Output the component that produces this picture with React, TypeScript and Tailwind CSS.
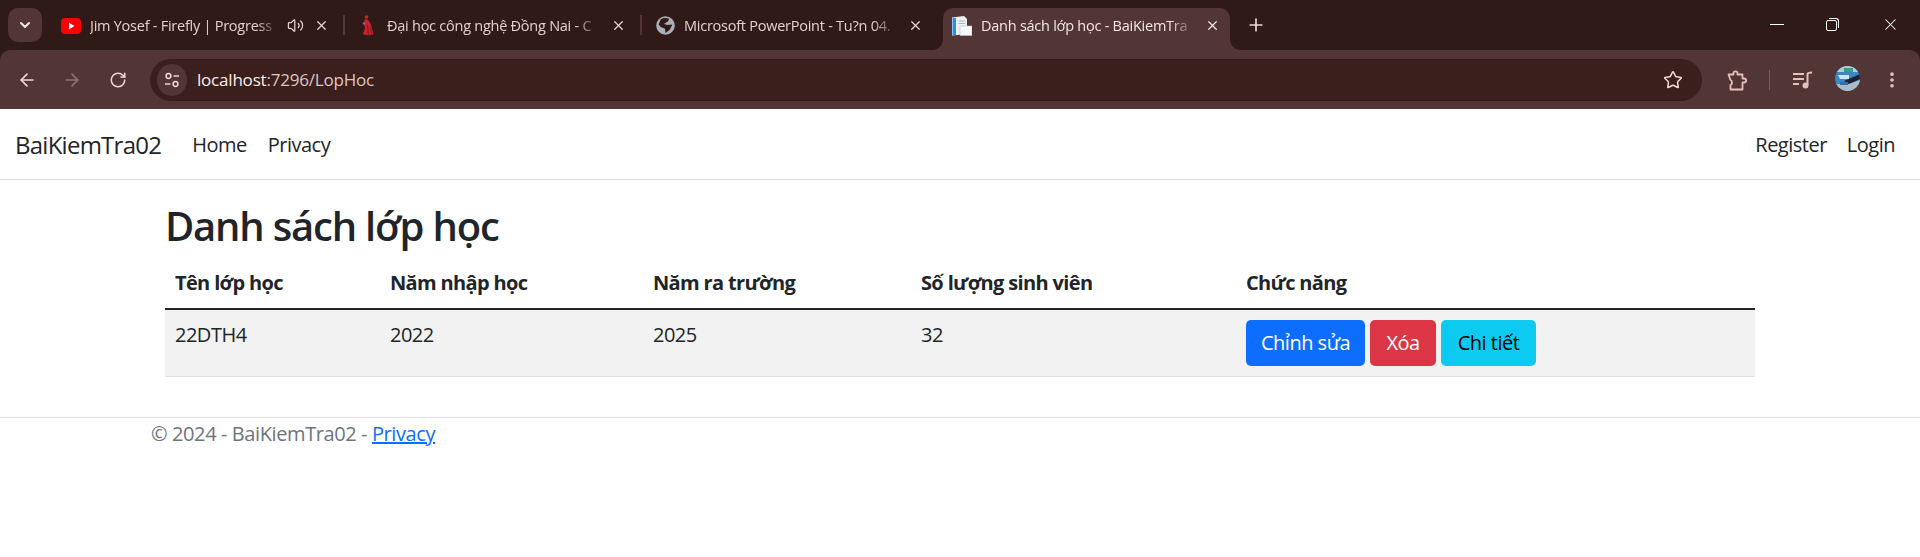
import { ChevronDown, ArrowLeft, ArrowRight, RotateCw, Star, EllipsisVertical, X, Plus, Volume2 } from 'lucide-react'
import type { ReactNode } from 'react'

function YoutubeIcon() {
  return (
    <svg width="20" height="16" viewBox="0 0 20 16">
      <rect x="0" y="0" width="20" height="16" rx="4" fill="#ff0000" />
      <path d="M8 4.6 L13.4 8 L8 11.4 Z" fill="#fff" />
    </svg>
  )
}

function SchoolIcon() {
  return (
    <svg width="14" height="21" viewBox="0 0 14 21">
      <circle cx="5.5" cy="2" r="1.8" fill="#d3232a" />
      <path d="M4 4 C7 4 9 7 10 10 L12.5 19 C12 20.5 3 20.5 2 19 L4 13 L2.5 8 Z" fill="#c9212a" />
      <path d="M6.5 10 L7.5 20 M9.5 12 L10.5 20" stroke="#7c1a1c" strokeWidth="1" />
      <circle cx="3" cy="8.5" r="1.2" fill="#3f7fb5" />
    </svg>
  )
}

function GlobeIcon() {
  return (
    <svg width="19" height="19" viewBox="0 0 18 18">
      <circle cx="9" cy="9" r="8.8" fill="#a9b0b6" />
      <path d="M4.5 3 C7 1.5 10 1.5 12.5 2.5 L11.5 5 L7.5 7.5 L11 8.5 L15.5 8 L13 13 L9 16 L8.5 12 L4.5 10.5 L2.5 8 Z" fill="#301a17" />
    </svg>
  )
}

function DocIcon() {
  return (
    <svg width="20" height="20" viewBox="0 0 20 20">
      <path d="M0 1.5 L12 0 L15 3 L15 18 L0 19.5 Z" fill="#eef1f4" />
      <rect x="0.5" y="2" width="3.5" height="17" fill="#2f8fe0" />
      <rect x="8" y="10" width="12" height="9.5" fill="#f7f8fa" stroke="#b9c2cc" strokeWidth="0.6" />
      <path d="M6.5 5 H13 M6.5 7.5 H13" stroke="#aab4bf" strokeWidth="1" />
    </svg>
  )
}

function ExtensionIcon() {
  return (
    <svg width="21" height="21" viewBox="0 0 21 21" fill="none" stroke="#e8bfb8" strokeWidth="1.8" strokeLinejoin="round">
      <path d="M1.5 4.5 H6.5 V3.2 C6.5 0.8 10.5 0.8 10.5 3.2 V4.5 H15.5 V8.5 H17 C19.8 8.5 19.8 12.5 17 12.5 H15.5 V19.5 H3.5 V15 C5.5 14.5 5.5 10.5 3.5 10 Z" />
    </svg>
  )
}

function MediaIcon() {
  return (
    <svg width="20" height="18" viewBox="0 0 20 18" fill="none" stroke="#e8bfb8" strokeWidth="2">
      <path d="M0 3 H11 M0 8 H11 M0 13 H6" />
      <path d="M14.5 14 V3 C14.5 2 15 1.5 19 1.5" />
      <circle cx="12.5" cy="14.5" r="3" fill="#e8bfb8" stroke="none" />
    </svg>
  )
}

function Avatar() {
  return (
    <svg width="25" height="25" viewBox="0 0 25 25">
      <defs>
        <clipPath id="av">
          <circle cx="12.5" cy="12.5" r="12.5" />
        </clipPath>
      </defs>
      <g clipPath="url(#av)">
        <rect width="25" height="25" fill="#3d86c6" />
        <rect y="0" width="25" height="6" fill="#a9cfdc" />
        <rect x="9" y="2" width="9" height="4" fill="#3f9a86" />
        <path d="M3 9 H14 V13 H5 Z" fill="#cfe4f2" />
        <path d="M9 15 L25 8 L25 13 L14 18 Z" fill="#1b2236" />
        <path d="M0 18 H14 L25 14 V25 H0 Z" fill="#aebcc6" />
        <path d="M5 16 H13 V19 H5 Z" fill="#2c6fb2" />
      </g>
    </svg>
  )
}

function SiteInfoIcon() {
  return (
    <svg width="16" height="16" viewBox="0 0 16 16" fill="none" stroke="#f0d9d4" strokeWidth="1.5">
      <circle cx="4.5" cy="4" r="2.4" />
      <path d="M9.5 4 H15" />
      <circle cx="11.5" cy="12" r="2.4" />
      <path d="M1 12 H6.5" />
    </svg>
  )
}

interface TabProps {
  icon: ReactNode
  title: string
  active?: boolean
  audio?: boolean
  divider?: boolean
}

function Tab({ icon, title, active, audio, divider }: TabProps) {
  return (
    <div className="relative flex h-[42px] w-[297px] shrink-0 items-center pl-[5px] pr-[5px]">
      <div className={`relative flex h-full w-full items-center rounded-t-[10px] pb-[7px] ${active ? 'bg-[#523535]' : ''}`}>
        {active && (
          <>
            <span className="absolute bottom-0 left-[-10px] h-[10px] w-[10px] bg-[radial-gradient(circle_at_0_0,transparent_9.5px,#523535_10px)]" />
            <span className="absolute bottom-0 right-[-10px] h-[10px] w-[10px] bg-[radial-gradient(circle_at_100%_0,transparent_9.5px,#523535_10px)]" />
          </>
        )}
        <span className="ml-[9px] flex w-[20px] shrink-0 items-center justify-center">{icon}</span>
        <span
          className={`ml-[9px] flex-1 overflow-hidden whitespace-nowrap text-[14.5px] tracking-[-0.25px] [mask-image:linear-gradient(to_right,black_88%,transparent)] ${active ? 'text-[#f6e6e2]' : 'text-[#e5cfca]'}`}
        >
          {title}
        </span>
        {audio && <Volume2 className="ml-[8px] shrink-0 text-[#e5cfca]" size={17} strokeWidth={1.8} />}
        <X className={`ml-[10px] mr-[10px] shrink-0 ${active ? 'text-[#f6e6e2]' : 'text-[#ecd3cd]'}`} size={15} strokeWidth={2} />
      </div>
      {divider && <span className="absolute right-[-1px] top-[7px] h-[20px] w-[2px] bg-[#523535]" />}
    </div>
  )
}

function TabStrip() {
  return (
    <div className="flex h-[50px] items-end">
      <div className="mb-[8px] ml-[8px] mr-[5px] flex h-[34px] w-[34px] items-center justify-center rounded-[10px] bg-[#523535]">
        <ChevronDown size={16} strokeWidth={3} className="text-[#f6e6e2]" />
      </div>
      <Tab icon={<YoutubeIcon />} title="Jim Yosef - Firefly | Progress" audio divider />
      <Tab icon={<SchoolIcon />} title="Đại học công nghệ Đồng Nai - C" divider />
      <Tab icon={<GlobeIcon />} title="Microsoft PowerPoint - Tu?n 04." />
      <Tab icon={<DocIcon />} title="Danh sách lớp học - BaiKiemTra" active />
      <Plus size={20} strokeWidth={2} className="mb-[15px] ml-[11px] text-[#f0d9d4]" />
      <div className="ml-auto mb-[16px] flex items-center text-white">
        <span className="mr-[42px] h-[1px] w-[14px] bg-white" />
        <span className="relative mr-[42px] block h-[13px] w-[13px]">
          <span className="absolute left-0 top-[2px] h-[11px] w-[11px] rounded-[2px] border border-white" />
          <span className="absolute right-0 top-0 h-[10px] w-[10px] rounded-tr-[3px] border-r border-t border-white" />
        </span>
        <X size={19} strokeWidth={1.3} className="mr-[20px]" />
      </div>
    </div>
  )
}

function Toolbar() {
  return (
    <div className="flex h-[59px] items-start rounded-t-[10px] bg-[#523535] pt-[9px] text-[#f0d9d4]">
      <div className="flex h-[42px] items-center">
        <ArrowLeft size={20} strokeWidth={2} className="ml-[17px]" />
        <ArrowRight size={20} strokeWidth={2} className="ml-[25px] text-[#8f7370]" />
        <RotateCw size={18} strokeWidth={2} className="ml-[27px]" />
      </div>
      <div className="ml-[23px] flex h-[42px] w-[1552px] items-center rounded-full bg-[#3a1f1c]">
        <span className="ml-[7px] flex h-[32px] w-[30px] items-center justify-center rounded-full bg-[#523535]">
          <SiteInfoIcon />
        </span>
        <span className="ml-[10px] text-[17px] tracking-[-0.2px] text-[#dcc7c2]">
          <span className="text-[#fbeeea]">localhost</span>:7296/LopHoc
        </span>
        <Star size={20} strokeWidth={1.8} className="ml-auto mr-[19px] text-[#f0d9d4]" />
      </div>
      <div className="flex h-[42px] items-center">
        <span className="ml-[25px] flex">
          <ExtensionIcon />
        </span>
        <span className="ml-[21px] h-[20px] w-[1px] bg-[#7a5a56]" />
        <span className="ml-[23px] flex">
          <MediaIcon />
        </span>
        <span className="mb-[3px] ml-[22px] flex">
          <Avatar />
        </span>
        <EllipsisVertical size={20} strokeWidth={2.4} className="ml-[22px] text-[#e8bfb8]" />
      </div>
    </div>
  )
}

function NavBar() {
  return (
    <nav className="flex h-[71px] items-center border-b border-[#dfdfdf] bg-white pl-[15px] pr-[25px] pt-[2px] text-[20px] tracking-[-0.5px] text-[#212529]">
      <a className="mr-[31px] text-[24px] tracking-[-0.75px]">BaiKiemTra02</a>
      <a className="mr-[21px]">Home</a>
      <a>Privacy</a>
      <div className="ml-auto flex gap-[20px]">
        <a>Register</a>
        <a>Login</a>
      </div>
    </nav>
  )
}

function ClassTable() {
  return (
    <table className="w-full table-fixed border-collapse text-[20px] leading-[30px] tracking-[-0.5px] text-[#212529]">
      <colgroup>
        <col className="w-[215px]" />
        <col className="w-[263px]" />
        <col className="w-[268px]" />
        <col className="w-[325px]" />
        <col />
      </colgroup>
      <thead>
        <tr className="border-b-2 border-[#212529] text-left">
          <th className="p-[10px] font-bold tracking-[-0.65px]">Tên lớp học</th>
          <th className="p-[10px] font-bold tracking-[-0.65px]">Năm nhập học</th>
          <th className="p-[10px] font-bold tracking-[-0.65px]">Năm ra trường</th>
          <th className="p-[10px] font-bold tracking-[-0.65px]">Số lượng sinh viên</th>
          <th className="p-[10px] font-bold tracking-[-0.65px]">Chức năng</th>
        </tr>
      </thead>
      <tbody>
        <tr className="border-b border-[#dee2e6] bg-[#f2f2f2] align-top">
          <td className="p-[10px]">22DTH4</td>
          <td className="p-[10px]">2022</td>
          <td className="p-[10px]">2025</td>
          <td className="p-[10px]">32</td>
          <td className="p-[10px]">
            <div className="flex gap-[5px]">
              <a className="w-[119px] rounded-[5px] bg-[#0d6efd] py-[8px] text-center text-white">Chỉnh sửa</a>
              <a className="w-[66px] rounded-[5px] bg-[#dc3545] py-[8px] text-center text-white">Xóa</a>
              <a className="w-[95px] rounded-[5px] bg-[#0dcaf0] py-[8px] text-center text-black">Chi tiết</a>
            </div>
          </td>
        </tr>
      </tbody>
    </table>
  )
}

export default function App() {
  return (
    <div className="h-[557px] w-[1920px] overflow-hidden bg-white font-['Open_Sans','Noto_Sans',sans-serif]">
      <div className="bg-[#301a17]">
        <TabStrip />
        <Toolbar />
      </div>
      <NavBar />
      <main className="px-[165px] pt-[22px]">
        <h1 className="mb-[8px] text-[40px] font-semibold leading-[48px] tracking-[-1.2px] text-[#212529]">Danh sách lớp học</h1>
        <ClassTable />
      </main>
      <footer className="mt-[40px] border-t border-[#dfdfdf] pl-[151px] pt-[1px] text-[20px] leading-[30px] tracking-[-0.4px] text-[#6c757d]">
        © 2024 - BaiKiemTra02 - <a className="text-[#0d6efd] underline">Privacy</a>
      </footer>
    </div>
  )
}
